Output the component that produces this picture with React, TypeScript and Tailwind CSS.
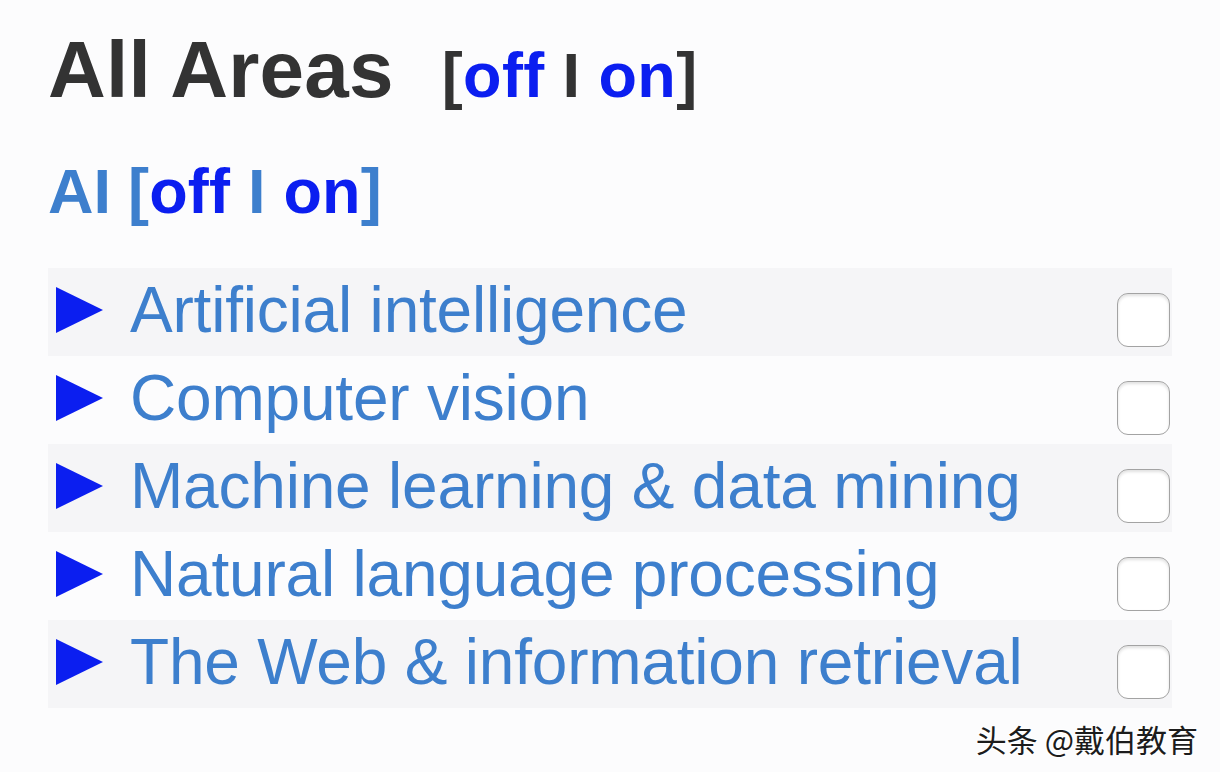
import React from "react";

const items = [
  "Artificial intelligence",
  "Computer vision",
  "Machine learning & data mining",
  "Natural language processing",
  "The Web & information retrieval",
];

function Tri() {
  return (
    <svg width="47" height="46" viewBox="0 0 47 46" className="ml-[8px] mb-[5px] shrink-0">
      <polygon points="0,0 47,23 0,46" fill="#0b1ef0" />
    </svg>
  );
}

export default function App() {
  return (
    <div
      className="relative w-[1220px] h-[772px] overflow-hidden bg-[#fcfcfd]"
      style={{ fontFamily: '"Liberation Sans", Arial, sans-serif' }}
    >
      <div className="pl-[48px] pt-[30px]">
        <div className="flex items-baseline leading-none">
          <span className="text-[80px] font-bold text-[#333333] tracking-[0.2px]">All Areas</span>
          <span className="ml-[48px] text-[63px] font-bold text-[#333333] tracking-[0.4px]">
            [<span className="text-[#0b1ef0]">off</span> I <span className="text-[#0b1ef0]">on</span>]
          </span>
        </div>
        <div className="mt-[50px] flex items-baseline leading-none text-[63px] font-bold text-[#3d7fcd]">
          <span>AI</span>
          <span className="ml-[17px] tracking-[0.2px]">
            [<span className="text-[#0b1ef0]">off</span> <span className="text-[#3d7fcd]">I</span> <span className="text-[#0b1ef0]">on</span>]
          </span>
        </div>
        <div className="mt-[45px] w-[1124px] flex flex-col">
          {items.map((t, i) => (
            <div
              key={t}
              className={`h-[88px] flex items-center ${i % 2 === 0 ? "bg-[#f5f5f7]" : ""}`}
            >
              <Tri />
              <span className="ml-[27px] mb-[4px] text-[64px] leading-none text-[#3d7fcd] tracking-[-0.2px]">
                {t}
              </span>
              <div className="ml-auto mr-[2px] mt-[16px] w-[53px] h-[54px] rounded-[11px] border-[1.5px] border-[#a3a3a3] bg-white shadow-[inset_0_2px_3px_rgba(0,0,0,0.12)]" />
            </div>
          ))}
        </div>
      </div>
      <div
        className="absolute right-[22px] bottom-[18px] text-[31px] leading-none text-[#1c1c1c]"
        style={{
          fontFamily: '"Noto Sans CJK SC", "Noto Sans", sans-serif',
          textShadow: "1px 1px 0 #fff, -1px -1px 0 #fff, 1px -1px 0 #fff, -1px 1px 0 #fff",
        }}
      >
        头条 @戴伯教育
      </div>
    </div>
  );
}
